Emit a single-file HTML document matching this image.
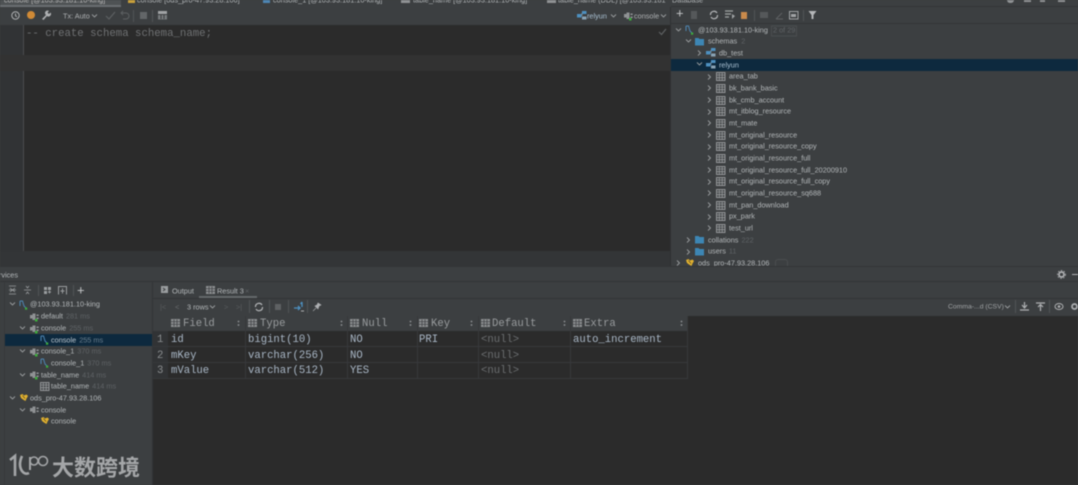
<!DOCTYPE html>
<html><head><meta charset="utf-8"><style>
html,body{margin:0;padding:0;background:#3c3f41}
#p{position:relative;width:1078px;height:485px;overflow:hidden;background:#3c3f41;font:7.3px/12px "Liberation Sans",sans-serif;color:#b4b8ba;filter:blur(.45px)}
#p div,#p span.a,#p svg{position:absolute}
.t{white-space:nowrap;transform:translateY(.5px)}
.g{color:#5f6366}
.m{font-family:"Liberation Mono",monospace;font-size:10.6px;line-height:12px;color:#a9b7c6;white-space:nowrap}
.h{color:#999c9e}
.i{fill:none;stroke:#afb1b3;stroke-width:1}
.ln{background:#2f3133}
</style></head><body><div id="p">
<svg width="0" height="0"><defs>
<g id="tb"><rect x=".5" y=".5" width="8.500" height="8" fill="#4a4d4f" stroke="#a4a7a9" stroke-width=".8"/><path d="M.5 3h8.500M.5 5.700h8.500M3.300 1v7.500M6.200 1v7.500" stroke="#a4a7a9" fill="none" stroke-width=".6"/></g>
<g id="r"><path d="M1 1.500l2.500 2.500L1 6.500" fill="none" stroke="#9a9d9f" stroke-width=".9"/></g>
<g id="d"><path d="M1 1.500l2.500 2.500L6 1.500" fill="none" stroke="#9a9d9f" stroke-width=".9"/></g>
<g id="f"><path d="M0 1h3.500l1 1H9v6.500H0z" fill="#3d86b4"/></g>
<g id="s"><rect x="5" y="0" width="4.500" height="3" fill="#4d90c0"/><rect x="0" y="3" width="4.500" height="3.500" fill="#4d90c0"/><rect x="5" y="5.500" width="4.500" height="3" fill="#8aa3b5"/><path d="M4.500 4.500H5V2" stroke="#8aa3b5" fill="none" stroke-width=".7"/></g>
<g id="c"><path d="M1 1h2.500l1.500 5 2.500 2.500M1 1v5" fill="none" stroke="#4d86b4" stroke-width="1"/><rect x="6" y="7.500" width="2.200" height="2.200" fill="#3cae3c"/></g>
<g id="q"><rect x="2.500" y="1.500" width="3" height="6.500" fill="#8f9294"/><rect x="0" y="3" width="2.500" height="3.500" fill="#8f9294"/><rect x="6.500" y="2.500" width="2.200" height="1.500" fill="#8f9294"/><rect x="6.500" y="5.500" width="2.200" height="1.500" fill="#8f9294"/></g>
<g id="y"><path d="M1 2l2.500-1 1.500 1.500 2.500-1 1.500 1.500-1.500 2.500-1 2.500-2.500-1.500-2-1.500z" fill="#e1b12f"/><path d="M3.500 2.500l2.500 3" stroke="#5a4c25" stroke-width=".7"/></g>
<g id="th"><rect x="0" y="0" width="9" height="8" fill="#8b8e90"/><path d="M3 .5v7M6 .5v7M0 2.700h9M0 5.300h9" stroke="#3c3f41" stroke-width=".7"/></g>
<g id="so"><circle cx="1.500" cy="1.500" r=".9" fill="#8f9294"/><circle cx="1.500" cy="5" r=".9" fill="#8f9294"/></g>
</defs></svg>

<!-- tabs -->
<div style="left:0;top:0;width:671px;height:6px;background:#3c3f41;overflow:hidden"></div>
<div style="left:0;top:0;width:121px;height:5px;background:#4e5254"></div>
<div style="left:0;top:5px;width:121px;height:2px;background:#6a6e71"></div>
<div class="t" style="left:4px;top:-6.500px;color:#bbb">console [@103.93.181.10-king]</div>
<div style="left:128px;top:0;width:7px;height:3px;background:#c9a03a"></div>
<div class="t" style="left:137px;top:-6.500px">console [ods_pro-47.93.28.106]</div>
<div style="left:263px;top:0;width:7px;height:3px;background:#4d86b4"></div>
<div class="t" style="left:273px;top:-6.500px">console_1 [@103.93.181.10-king]</div>
<div style="left:401px;top:0;width:9px;height:3px;background:#8f9294"></div>
<div class="t" style="left:413px;top:-6.500px">table_name [@103.93.181.10-king]</div>
<div style="left:547px;top:0;width:9px;height:3px;background:#8f9294"></div>
<div class="t" style="left:558px;top:-6.500px">table_name (DDL) [@103.93.181</div>
<div class="t" style="left:672px;top:-6.500px">Database</div>

<!-- editor toolbar -->
<svg style="left:10px;top:10px" width="14" height="12"><circle cx="5.500" cy="5.500" r="3.700" class="i"/><path d="M5.500 3.500v2.300l1.400 1" class="i"/></svg>
<div style="left:27px;top:11px;width:8px;height:8px;border-radius:50%;background:#d08a36"></div>
<svg style="left:41px;top:10px" width="11" height="11"><path d="M1 9l4-4a2.500 2.500 0 0 1 3-4L6.500 2.500 8 4l1.500-1.500A2.500 2.500 0 0 1 6 6l-3.500 4z" fill="#afb1b3"/></svg>
<div class="t" style="left:63px;top:9.500px;color:#aeb1b3">Tx: Auto</div>
<svg style="left:91px;top:13px" width="8" height="6"><use href="#d"/></svg>
<svg style="left:105px;top:11px" width="11" height="9"><path d="M1 5l3 3 6-7" fill="none" stroke="#5d6062" stroke-width="1.200"/></svg>
<svg style="left:119px;top:10px" width="11" height="11"><path d="M2 3h5a3 3 0 0 1 0 6H4M4 1L2 3l2 2" fill="none" stroke="#5d6062"/></svg>
<div class="ln" style="left:133px;top:10px;width:1px;height:12px;background:#505355"></div>
<div style="left:140px;top:12px;width:7px;height:7px;background:#636668"></div>
<div class="ln" style="left:152px;top:10px;width:1px;height:12px;background:#505355"></div>
<svg style="left:158px;top:11px" width="10" height="9"><rect width="9" height="3" fill="#a0a3a5"/><rect y="4" width="9" height="4.500" fill="#777a7c"/><path d="M3 4v4M6 4v4" stroke="#3c3f41"/></svg>
<svg style="left:577px;top:11px" width="10" height="10"><use href="#s"/></svg>
<div class="t" style="left:587px;top:9.500px;color:#a9c0d2">relyun</div>
<svg style="left:610px;top:13px" width="8" height="6"><use href="#d"/></svg>
<svg style="left:624px;top:11px" width="10" height="10"><use href="#q"/><rect x="5" y="7" width="2.500" height="2.500" fill="#3cae3c"/></svg>
<div class="t" style="left:634px;top:9.500px;color:#aeb1b3">console</div>
<svg style="left:660px;top:13px" width="8" height="6"><use href="#d"/></svg>

<!-- editor -->
<div style="left:0;top:25px;width:671px;height:226px;background:#2b2b2b"></div>
<div style="left:0;top:25px;width:23px;height:226px;background:#313335"></div>
<div style="left:23px;top:25px;width:1px;height:226px;background:#4b4d4f"></div>
<div style="left:0;top:55px;width:671px;height:16px;background:#323232"></div>
<div class="m" style="left:26px;top:27px;color:#6f7173;font-size:10.700px;line-height:12px;margin-top:1px">-- create schema schema_name;</div>
<svg style="left:658px;top:28px" width="9" height="8"><path d="M1 4l2.500 2.500L8 1" fill="none" stroke="#5e6163" stroke-width="1.200"/></svg>
<div style="left:0;top:251px;width:671px;height:15px;background:#333537"></div>
<div style="left:670px;top:7px;width:1px;height:259px;background:#2f3133"></div>

<!-- db panel toolbar -->
<div style="left:671px;top:6px;width:407px;height:1px;background:#333537"></div>
<div style="left:671px;top:23px;width:407px;height:1px;background:#333537"></div>
<div class="t" style="left:676px;top:7px;font-size:13px;color:#c4c6c8">+</div>
<div style="left:691px;top:11px;width:6px;height:8px;background:#55585a"></div>
<svg style="left:709px;top:10px" width="10" height="10"><path d="M8 3A3.500 3.500 0 0 0 1.500 5M2 7a3.500 3.500 0 0 0 6.500-2" fill="none" stroke="#b4b6b8" stroke-width="1.200"/></svg>
<svg style="left:725px;top:10px" width="11" height="10"><path d="M0 1h8M0 4h6M0 7h4" stroke="#a0a3a5" stroke-width="1.300"/><path d="M7 4l3 2-3 3" fill="#a0a3a5"/></svg>
<div style="left:741px;top:12px;width:6px;height:7px;background:#c98a4b"></div>
<div style="left:754px;top:10px;width:1px;height:11px;background:#505355"></div>
<div style="left:760px;top:12px;width:8px;height:6px;background:#55585a"></div>
<svg style="left:775px;top:11px" width="9" height="9"><path d="M1 8h7M1 8l6-6" stroke="#5e6163" fill="none"/></svg>
<svg style="left:789px;top:11px" width="10" height="9"><rect x=".5" y=".5" width="8.500" height="7.500" fill="none" stroke="#a0a3a5"/><rect x="2" y="3" width="5" height="3" fill="#a0a3a5"/></svg>
<div style="left:803px;top:10px;width:1px;height:11px;background:#505355"></div>
<svg style="left:808px;top:10px" width="10" height="10"><path d="M.5 1h8L5.500 5v4h-2V5z" fill="#b4b6b8"/></svg>
<div style="left:1007px;top:0;width:7px;height:3px;background:#8f9294;border-radius:0 0 4px 4px"></div>
<div style="left:1024px;top:0;width:7px;height:2px;background:#8f9294"></div>
<div style="left:1040px;top:0;width:5px;height:2px;background:#8f9294"></div>
<div style="left:1058px;top:0;width:7px;height:2px;background:#8f9294"></div>

<!-- db tree -->
<div style="left:671px;top:59px;width:407px;height:12px;background:#0d293e"></div>
<svg style="left:675px;top:27px" width="7" height="7"><use href="#d"/></svg>
<svg style="left:685px;top:25px" width="10" height="11"><use href="#c"/></svg>
<div class="t" style="left:698px;top:24px;color:#b4b8ba">@103.93.181.10-king</div>
<div class="t" style="left:771px;top:24px;color:#5f6366;border:1px solid #4a4d4f;height:9px;line-height:8px;padding:0 1px;margin-top:1px">2 of 29</div>
<svg style="left:685px;top:38px" width="7" height="7"><use href="#d"/></svg>
<svg style="left:695px;top:37px" width="10" height="10"><use href="#f"/></svg>
<div class="t" style="left:708px;top:35px">schemas <span class="g" style="margin-left:2px">2</span></div>
<svg style="left:697px;top:49px" width="5" height="8"><use href="#r"/></svg>
<svg style="left:706px;top:48px" width="10" height="10"><use href="#s"/></svg>
<div class="t" style="left:719px;top:47px">db_test</div>
<svg style="left:696px;top:61px" width="7" height="7"><use href="#d"/></svg>
<svg style="left:706px;top:60px" width="10" height="10"><use href="#s"/></svg>
<div class="t" style="left:719px;top:59px;color:#a9c0d2">relyun</div>

<svg style="left:707px;top:73px" width="5" height="8"><use href="#r"/></svg><svg style="left:716px;top:72px" width="10" height="9"><use href="#tb"/></svg><div class="t" style="left:729px;top:70px">area_tab</div>
<svg style="left:707px;top:84px" width="5" height="8"><use href="#r"/></svg><svg style="left:716px;top:84px" width="10" height="9"><use href="#tb"/></svg><div class="t" style="left:729px;top:82px">bk_bank_basic</div>
<svg style="left:707px;top:96px" width="5" height="8"><use href="#r"/></svg><svg style="left:716px;top:96px" width="10" height="9"><use href="#tb"/></svg><div class="t" style="left:729px;top:94px">bk_cmb_account</div>
<svg style="left:707px;top:108px" width="5" height="8"><use href="#r"/></svg><svg style="left:716px;top:107px" width="10" height="9"><use href="#tb"/></svg><div class="t" style="left:729px;top:105px">mt_itblog_resource</div>
<svg style="left:707px;top:119px" width="5" height="8"><use href="#r"/></svg><svg style="left:716px;top:119px" width="10" height="9"><use href="#tb"/></svg><div class="t" style="left:729px;top:117px">mt_mate</div>
<svg style="left:707px;top:131px" width="5" height="8"><use href="#r"/></svg><svg style="left:716px;top:131px" width="10" height="9"><use href="#tb"/></svg><div class="t" style="left:729px;top:129px">mt_original_resource</div>
<svg style="left:707px;top:143px" width="5" height="8"><use href="#r"/></svg><svg style="left:716px;top:142px" width="10" height="9"><use href="#tb"/></svg><div class="t" style="left:729px;top:140px">mt_original_resource_copy</div>
<svg style="left:707px;top:154px" width="5" height="8"><use href="#r"/></svg><svg style="left:716px;top:154px" width="10" height="9"><use href="#tb"/></svg><div class="t" style="left:729px;top:152px">mt_original_resource_full</div>
<svg style="left:707px;top:166px" width="5" height="8"><use href="#r"/></svg><svg style="left:716px;top:166px" width="10" height="9"><use href="#tb"/></svg><div class="t" style="left:729px;top:164px">mt_original_resource_full_20200910</div>
<svg style="left:707px;top:178px" width="5" height="8"><use href="#r"/></svg><svg style="left:716px;top:177px" width="10" height="9"><use href="#tb"/></svg><div class="t" style="left:729px;top:175px">mt_original_resource_full_copy</div>
<svg style="left:707px;top:189px" width="5" height="8"><use href="#r"/></svg><svg style="left:716px;top:189px" width="10" height="9"><use href="#tb"/></svg><div class="t" style="left:729px;top:187px">mt_original_resource_sq688</div>
<svg style="left:707px;top:201px" width="5" height="8"><use href="#r"/></svg><svg style="left:716px;top:201px" width="10" height="9"><use href="#tb"/></svg><div class="t" style="left:729px;top:199px">mt_pan_download</div>
<svg style="left:707px;top:213px" width="5" height="8"><use href="#r"/></svg><svg style="left:716px;top:212px" width="10" height="9"><use href="#tb"/></svg><div class="t" style="left:729px;top:210px">px_park</div>
<svg style="left:707px;top:224px" width="5" height="8"><use href="#r"/></svg><svg style="left:716px;top:224px" width="10" height="9"><use href="#tb"/></svg><div class="t" style="left:729px;top:222px">test_url</div>
<svg style="left:686px;top:236px" width="5" height="8"><use href="#r"/></svg><svg style="left:695px;top:235px" width="10" height="10"><use href="#f"/></svg><div class="t" style="left:708px;top:234px">collations <span class="g" style="margin-left:1px">222</span></div>
<svg style="left:686px;top:248px" width="5" height="8"><use href="#r"/></svg><svg style="left:695px;top:247px" width="10" height="10"><use href="#f"/></svg><div class="t" style="left:708px;top:245px">users <span class="g" style="margin-left:1px">11</span></div>
<svg style="left:676px;top:259px" width="5" height="8"><use href="#r"/></svg><svg style="left:685px;top:258px" width="10" height="10"><use href="#y"/></svg>
<div style="left:671px;top:257px;width:407px;height:9px;overflow:hidden"><div class="t" style="left:27px;top:0px">ods_pro-47.93.28.106</div><div style="left:104px;top:2px;width:11px;height:9px;border:1px solid #4a4d4f;border-radius:3px"></div></div>

<!-- services header -->
<div style="left:0;top:266px;width:1078px;height:1px;background:#333537"></div>
<div class="t" style="left:-10px;top:268.500px;color:#b4b8ba">Services</div>
<svg style="left:1057px;top:270px" width="9" height="9"><circle cx="4.500" cy="4.500" r="2.500" fill="none" stroke="#afb1b3" stroke-width="1.700"/><circle cx="4.500" cy="4.500" r="4" fill="none" stroke="#afb1b3" stroke-width=".8" stroke-dasharray="1.500 1.500"/></svg>
<div style="left:1072px;top:274px;width:6px;height:1px;background:#afb1b3"></div>
<div style="left:0;top:281px;width:1078px;height:1px;background:#323436"></div>

<!-- services toolbar -->
<svg style="left:8px;top:285px" width="10" height="10"><path d="M1 1h7M1 9h7M2 3l2.500 2L7 3M2 7l2.500-2L7 7M1 5h7" stroke="#9a9d9f" fill="none" stroke-width=".8"/></svg>
<svg style="left:23px;top:285px" width="10" height="10"><path d="M1 5h7M3 1l1.500 2L6 1M3 9l1.500-2L6 9" stroke="#9a9d9f" fill="none" stroke-width=".8"/></svg>
<div style="left:38px;top:285px;width:1px;height:11px;background:#505355"></div>
<svg style="left:43px;top:286px" width="10" height="10"><path d="M1 1h3v3H1zM5 1h3v3H5zM1 5h3v3H1z" fill="#9a9d9f"/><path d="M5 6h3M6.500 4.500v3" stroke="#9a9d9f"/></svg>
<svg style="left:57px;top:285px" width="11" height="11"><path d="M1.500 9.500v-8h8v8M5.500 3.500v5M3.500 6h4" stroke="#9a9d9f" fill="none"/></svg>
<div style="left:73px;top:285px;width:1px;height:11px;background:#505355"></div>
<div class="t" style="left:77px;top:284px;font-size:13px;color:#c4c6c8">+</div>
<div style="left:152px;top:282px;width:1px;height:203px;background:#323436"></div>
<div style="left:4px;top:282px;width:1px;height:203px;background:#37393b"></div>

<!-- services tree -->
<div style="left:5px;top:334px;width:147px;height:12px;background:#0d293e"></div>
<svg style="left:9px;top:301px" width="7" height="7"><use href="#d"/></svg><svg style="left:19px;top:300px" width="10" height="11"><use href="#c"/></svg><div class="t" style="left:30px;top:298px">@103.93.181.10-king</div>
<svg style="left:30px;top:312px" width="10" height="10"><use href="#q"/><rect x="5" y="7" width="2.500" height="2.500" fill="#3cae3c"/></svg><div class="t" style="left:41px;top:310px">default <span class="g" style="margin-left:1px">281 ms</span></div>
<svg style="left:19px;top:325px" width="7" height="7"><use href="#d"/></svg><svg style="left:30px;top:324px" width="10" height="10"><use href="#q"/><rect x="5" y="7" width="2.500" height="2.500" fill="#3cae3c"/></svg><div class="t" style="left:41px;top:322px">console <span class="g" style="margin-left:1px">255 ms</span></div>
<svg style="left:40px;top:335px" width="10" height="11"><use href="#c"/></svg><div class="t" style="left:51px;top:334px;color:#bcc6cf">console <span style="color:#6b7f8e;margin-left:1px">255 ms</span></div>
<svg style="left:19px;top:348px" width="7" height="7"><use href="#d"/></svg><svg style="left:30px;top:347px" width="10" height="10"><use href="#q"/><rect x="5" y="7" width="2.500" height="2.500" fill="#3cae3c"/></svg><div class="t" style="left:41px;top:345px">console_1 <span class="g" style="margin-left:1px">370 ms</span></div>
<svg style="left:40px;top:358px" width="10" height="11"><use href="#c"/></svg><div class="t" style="left:51px;top:357px">console_1 <span class="g" style="margin-left:1px">370 ms</span></div>
<svg style="left:19px;top:372px" width="7" height="7"><use href="#d"/></svg><svg style="left:30px;top:370px" width="10" height="10"><use href="#q"/><rect x="5" y="7" width="2.500" height="2.500" fill="#3cae3c"/></svg><div class="t" style="left:41px;top:369px">table_name <span class="g" style="margin-left:1px">414 ms</span></div>
<svg style="left:40px;top:382px" width="10" height="9"><use href="#tb"/></svg><div class="t" style="left:51px;top:380px">table_name <span class="g" style="margin-left:1px">414 ms</span></div>
<svg style="left:9px;top:395px" width="7" height="7"><use href="#d"/></svg><svg style="left:19px;top:393px" width="10" height="10"><use href="#y"/></svg><div class="t" style="left:30px;top:392px">ods_pro-47.93.28.106</div>
<svg style="left:19px;top:407px" width="7" height="7"><use href="#d"/></svg><svg style="left:30px;top:405px" width="10" height="10"><use href="#q"/></svg><div class="t" style="left:41px;top:404px">console</div>
<svg style="left:40px;top:416px" width="10" height="10"><use href="#y"/></svg><div class="t" style="left:51px;top:415px">console</div>

<!-- watermark -->
<svg style="left:8px;top:452px" width="42" height="28"><path d="M2 8l5-4v20M14 4q-4 9 0 15q3 4 7 2" fill="none" stroke="#a4a6a8" stroke-width="2.600"/><path d="M22 18V5" stroke="#a4a6a8" stroke-width="2"/><circle cx="26" cy="9" r="4" fill="none" stroke="#a4a6a8" stroke-width="1.600"/><circle cx="35" cy="9" r="4.500" fill="none" stroke="#a4a6a8" stroke-width="1.600"/></svg>
<div class="t" style="left:52px;top:453px;font:700 22px/26px 'Noto Sans CJK SC',sans-serif;color:#a4a6a8;letter-spacing:0">大数跨境</div>

<!-- results tabs -->
<svg style="left:161px;top:286px" width="8" height="8"><rect width="7" height="7" fill="#9a9d9f"/><path d="M2 2l2 1.500L2 5" stroke="#3c3f41" fill="none"/></svg>
<div class="t" style="left:172px;top:284.500px">Output</div>
<svg style="left:206px;top:286px" width="9" height="9"><use href="#th"/></svg>
<div class="t" style="left:217px;top:284.500px">Result 3</div>
<div class="t g" style="left:245px;top:284.500px">×</div>
<div style="left:199px;top:296px;width:58px;height:2px;background:#65696b"></div>
<div style="left:153px;top:298px;width:925px;height:1px;background:#323436"></div>

<!-- results toolbar -->
<div class="t" style="left:160px;top:301px;color:#5a5d5f">|&lt;</div>
<div class="t" style="left:175px;top:301px;color:#6a6d6f">&lt;</div>
<div class="t" style="left:187px;top:301px">3 rows</div>
<svg style="left:209px;top:304px" width="7" height="6"><use href="#d"/></svg>
<div class="t" style="left:224px;top:301px;color:#5a5d5f">&gt;</div>
<div class="t" style="left:236px;top:301px;color:#5a5d5f">&gt;|</div>
<div style="left:249px;top:300px;width:1px;height:13px;background:#505355"></div>
<svg style="left:254px;top:302px" width="10" height="10"><path d="M8 3A3.500 3.500 0 0 0 1.500 5M2 7a3.500 3.500 0 0 0 6.500-2" fill="none" stroke="#b4b6b8" stroke-width="1.200"/></svg>
<div style="left:269px;top:300px;width:1px;height:13px;background:#505355"></div>
<div style="left:275px;top:304px;width:6px;height:6px;background:#5e6163"></div>
<div style="left:288px;top:300px;width:1px;height:13px;background:#505355"></div>
<svg style="left:293px;top:301px" width="11" height="12"><path d="M1 7h6M5 5l2 2-2 2" stroke="#4d90c0" fill="none" stroke-width="1.300"/><path d="M9 1v5M7.500 3L9 1" stroke="#4d90c0" fill="none" stroke-width="1.300"/><path d="M8 10h3" stroke="#afb1b3"/></svg>
<div style="left:307px;top:300px;width:1px;height:13px;background:#505355"></div>
<svg style="left:312px;top:302px" width="10" height="10"><path d="M1 9l3-3M3 4l3 3 1-3 2-1-3-2-1 2z" fill="#afb1b3" stroke="#afb1b3" stroke-width=".6"/></svg>
<div class="t" style="left:948px;top:301px;color:#a0a3a5;font-size:6.800px">Comma-...d (CSV)</div>
<svg style="left:1004px;top:304px" width="7" height="6"><use href="#d"/></svg>
<div style="left:1015px;top:300px;width:1px;height:13px;background:#505355"></div>
<svg style="left:1020px;top:302px" width="9" height="10"><path d="M4.500 0v5M2 3l2.500 3L7 3M0 8h9" stroke="#afb1b3" fill="none" stroke-width="1.200"/></svg>
<svg style="left:1036px;top:302px" width="9" height="10"><path d="M0 1h9M4.500 9V3M2 5l2.500-2.500L7 5" stroke="#afb1b3" fill="none" stroke-width="1.200"/></svg>
<div style="left:1049px;top:300px;width:1px;height:13px;background:#505355"></div>
<svg style="left:1054px;top:302px" width="11" height="10"><ellipse cx="5" cy="4.500" rx="4" ry="3" fill="none" stroke="#afb1b3"/><circle cx="5" cy="4.500" r="1.300" fill="#afb1b3"/></svg>
<svg style="left:1070px;top:302px" width="8" height="10"><circle cx="4.500" cy="4.500" r="2.500" fill="none" stroke="#afb1b3" stroke-width="1.700"/></svg>

<!-- grid -->
<div style="left:153px;top:316px;width:925px;height:169px;background:#2b2b2b"></div>
<div style="left:153px;top:316px;width:535px;height:15px;background:#3c3f41"></div>
<div style="left:153px;top:331px;width:535px;height:47px;background:#2b2b2b"></div>
<div style="left:153px;top:331px;width:15px;height:47px;background:#313335"></div>
<div style="left:153px;top:346px;width:535px;height:1px;background:#37393b"></div>
<div style="left:153px;top:362px;width:535px;height:1px;background:#37393b"></div>
<div style="left:153px;top:378px;width:535px;height:1px;background:#37393b"></div>
<div style="left:245px;top:316px;width:1px;height:62px;background:#37393b"></div>
<div style="left:347px;top:316px;width:1px;height:62px;background:#37393b"></div>
<div style="left:417px;top:316px;width:1px;height:62px;background:#37393b"></div>
<div style="left:478px;top:316px;width:1px;height:62px;background:#37393b"></div>
<div style="left:570px;top:316px;width:1px;height:62px;background:#37393b"></div>
<div style="left:687px;top:316px;width:1px;height:62px;background:#37393b"></div>

<svg style="left:171px;top:319px" width="9" height="8"><use href="#th"/></svg><div class="m h" style="left:183px;top:318px">Field</div><svg style="left:237px;top:320px" width="3" height="7"><use href="#so"/></svg>
<svg style="left:248px;top:319px" width="9" height="8"><use href="#th"/></svg><div class="m h" style="left:260px;top:318px">Type</div><svg style="left:340px;top:320px" width="3" height="7"><use href="#so"/></svg>
<svg style="left:350px;top:319px" width="9" height="8"><use href="#th"/></svg><div class="m h" style="left:362px;top:318px">Null</div><svg style="left:409px;top:320px" width="3" height="7"><use href="#so"/></svg>
<svg style="left:419px;top:319px" width="9" height="8"><use href="#th"/></svg><div class="m h" style="left:431px;top:318px">Key</div><svg style="left:470px;top:320px" width="3" height="7"><use href="#so"/></svg>
<svg style="left:481px;top:319px" width="9" height="8"><use href="#th"/></svg><div class="m h" style="left:492px;top:318px">Default</div><svg style="left:563px;top:320px" width="3" height="7"><use href="#so"/></svg>
<svg style="left:573px;top:319px" width="9" height="8"><use href="#th"/></svg><div class="m h" style="left:584px;top:318px">Extra</div><svg style="left:680px;top:320px" width="3" height="7"><use href="#so"/></svg>

<div class="m" style="left:157px;top:334px;color:#8a8d8f">1</div>
<div class="m" style="left:157px;top:350px;color:#8a8d8f">2</div>
<div class="m" style="left:157px;top:365px;color:#8a8d8f">3</div>
<div class="m" style="left:171px;top:334px">id</div>
<div class="m" style="left:171px;top:350px">mKey</div>
<div class="m" style="left:171px;top:365px">mValue</div>
<div class="m" style="left:248px;top:334px">bigint(10)</div>
<div class="m" style="left:248px;top:350px">varchar(256)</div>
<div class="m" style="left:248px;top:365px">varchar(512)</div>
<div class="m" style="left:350px;top:334px">NO</div>
<div class="m" style="left:350px;top:350px">NO</div>
<div class="m" style="left:350px;top:365px">YES</div>
<div class="m" style="left:419px;top:334px">PRI</div>
<div class="m" style="left:481px;top:334px;color:#6b6e70">&lt;null&gt;</div>
<div class="m" style="left:481px;top:350px;color:#6b6e70">&lt;null&gt;</div>
<div class="m" style="left:481px;top:365px;color:#6b6e70">&lt;null&gt;</div>
<div class="m" style="left:573px;top:334px">auto_increment</div>
</div></body></html>
